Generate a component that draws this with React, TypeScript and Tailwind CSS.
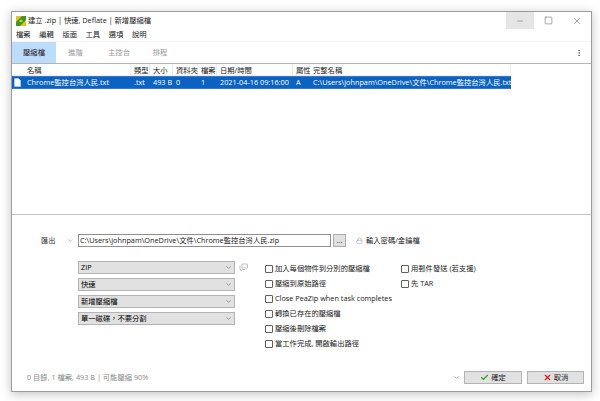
import React from 'react';
import { Check, ChevronDown, Lock, Minus, MoreVertical, Square, X } from 'lucide-react';

const cjk = { fontFamily: '"Open Sans", "Noto Sans CJK TC", sans-serif' };

const menus = ['檔案', '編輯', '版面', '工具', '選項', '說明'];

const columns = [
  { name: '名稱', width: 'w-[107px]', value: 'Chrome監控台灣人民.txt' },
  { name: '類型', width: 'w-[19px]', value: '.txt' },
  { name: '大小', width: 'w-[23px]', value: '493 B' },
  { name: '資料夾', width: 'w-[25px]', value: '0' },
  { name: '檔案', width: 'w-[19px]', value: '1' },
  { name: '日期/時間', width: 'w-[76px]', value: '2021-04-16 09:16:00' },
  { name: '屬性', width: 'w-[17px]', value: 'A' },
  { name: '完整名稱', width: 'w-[201px]', value: 'C:\\Users\\johnpam\\OneDrive\\文件\\Chrome監控台灣人民.txt' },
];

const selects = ['ZIP', '快速', '新增壓縮檔', '單一磁碟，不要分割'];

const leftChecks = [
  '加入每個物件到分別的壓縮檔',
  '壓縮到原始路徑',
  'Close PeaZip when task completes',
  '轉換已存在的壓縮檔',
  '壓縮後刪除檔案',
  '當工作完成, 開啟輸出路徑',
];

const rightChecks = ['用郵件發送 (若支援)', '先 TAR'];

const CheckRow = ({ label }: { label: string }) => (
  <div className="flex h-[15px] items-center gap-[2px]">
    <span className="h-[8px] w-[8px] rounded-[1px] border border-[#5f5f5f] bg-white" />
    <span className="whitespace-nowrap">{label}</span>
  </div>
);

const App = () => {
  return (
    <div className="h-[401px] w-[600px] overflow-hidden bg-white pl-[11px] pt-[11px] text-[7.3px] text-[#222]" style={cjk}>
      <div className="flex h-[381px] w-[581px] flex-col border border-[#9c9c9c] bg-white shadow-[0_2px_10px_rgba(0,0,0,0.25)]">
        {/* title bar */}
        <div className="flex h-[17px] shrink-0 items-center pl-[4px]">
          <svg width="10" height="10" viewBox="0 0 10 10" className="mr-[2px]">
            <rect width="10" height="10" fill="#e9c11f" />
            <path d="M0 10 L0 6 L6 0 L10 0 L10 4 L4 10 Z" fill="#3f9a1c" />
            <ellipse cx="5" cy="5" rx="1.8" ry="1.2" fill="#9fd64a" />
          </svg>
          <span>建立 .zip | 快速, Deflate | 新增壓縮檔</span>
          <div className="ml-auto flex h-[17px] self-start">
            <div className="flex w-[28px] items-center justify-center bg-[#e5e5e5]">
              <Minus size={8} strokeWidth={1} />
            </div>
            <div className="flex w-[28px] items-center justify-center">
              <Square size={9} strokeWidth={1} />
            </div>
            <div className="flex w-[29px] items-center justify-center">
              <X size={10} strokeWidth={1} />
            </div>
          </div>
        </div>

        {/* menu */}
        <div className="flex h-[12px] shrink-0 items-center gap-[8.2px] pl-[4px] pb-[1px]">
          {menus.map((m) => (
            <span key={m} className="w-[15px] whitespace-nowrap">{m}</span>
          ))}
        </div>

        {/* tabs */}
        <div className="flex h-[23px] shrink-0 items-stretch border-t border-b border-t-[#f3f3f3] border-b-[#b5b5b5]">
          <div className="flex w-[44px] items-center justify-center bg-[#bcdcfb]">壓縮檔</div>
          <div className="flex w-[39px] items-center justify-center text-[#9a9a9a]">進階</div>
          <div className="flex w-[48px] items-center justify-center text-[#9a9a9a]">主控台</div>
          <div className="flex w-[34px] items-center justify-center text-[#9a9a9a]">排程</div>
          <div className="ml-auto flex items-center pr-[8px]">
            <MoreVertical size={8} strokeWidth={1.5} />
          </div>
        </div>

        {/* file list */}
        <div className="h-[151px] shrink-0 border-b border-[#c4c4c4]">
          <div className="flex h-[12px] w-[499px] items-center border-b border-[#ededed] pl-[12px]">
            {columns.map((c) => (
              <div key={c.name} className={`${c.width} h-full shrink-0 whitespace-nowrap border-r border-[#ececec] pl-[3px] leading-[12px]`}>
                {c.name}
              </div>
            ))}
          </div>
          <div className="flex h-[13px] w-[499px] items-center border-y border-[#3b78c8] bg-[#0a62c2] text-white">
            <svg width="7" height="9" viewBox="0 0 7 9" className="ml-[2px] mr-[3px] shrink-0">
              <path d="M0.5 0.5 H4.5 L6.5 2.5 V8.5 H0.5 Z" fill="#fff" stroke="#c6d4e6" strokeWidth="0.6" />
            </svg>
            {columns.map((c) => (
              <div key={c.name} className={`${c.width} shrink-0 overflow-hidden whitespace-nowrap pl-[3px] leading-[11px]`}>
                {c.value}
              </div>
            ))}
          </div>
        </div>

        {/* output options */}
        <div className="flex min-h-0 flex-1 flex-col pl-[15px] pr-[7px]">
          <div className="mt-[19px] flex h-[13px] items-center">
            <span className="ml-[14px] w-[26px] text-[#333]">匯出</span>
            <ChevronDown size={7} strokeWidth={1.2} className="text-[#555]" />
            <div className="ml-[4px] flex h-[13px] w-[253px] items-center border border-[#8f8f8f] pl-[1px] leading-none">
              C:\Users\johnpam\OneDrive\文件\Chrome監控台灣人民.zip
            </div>
            <div className="ml-[2px] flex h-[13px] w-[13px] items-center justify-center border border-[#adadad] bg-[#e1e1e1] leading-none">...</div>
            <Lock size={7} strokeWidth={1} className="ml-[10px] text-[#555]" />
            <span className="ml-[3px]">輸入密碼/金鑰檔</span>
          </div>

          <div className="mt-[14px] flex">
            <div className="ml-[51px] flex w-[157px] shrink-0 flex-col gap-[4px] text-black">
              {selects.map((s) => (
                <div key={s} className="flex h-[13px] items-center justify-between border border-[#b4b4b4] bg-[#e1e1e1] px-[2px] leading-none">
                  <span>{s}</span>
                  <ChevronDown size={7} strokeWidth={1.4} className="text-[#333]" />
                </div>
              ))}
            </div>
            <svg width="9" height="9" viewBox="0 0 9 9" className="ml-[4px] mt-[2px] shrink-0" fill="none" stroke="#aaa" strokeWidth="0.7">
              <path d="M3 1 H8.5 V5 H3 Z M1 2.5 V6.5 H2 V8 L3.5 6.5 H6" />
            </svg>
            <div className="ml-[17px] w-[136px] shrink-0">
              {leftChecks.map((l) => (
                <CheckRow key={l} label={l} />
              ))}
            </div>
            <div>
              {rightChecks.map((l) => (
                <CheckRow key={l} label={l} />
              ))}
            </div>
          </div>

          <div className="mt-auto mb-[7px] flex h-[13px] items-center">
            <span className="text-[#8a8a8a]">0 目錄, 1 檔案, 493 B | 可能壓縮 90%</span>
            <ChevronDown size={7} strokeWidth={1.4} className="ml-auto mr-[4px] text-[#333]" />
            <div className="flex h-[13px] w-[58px] items-center justify-center gap-[2px] border border-[#b4b4b4] bg-[#e1e1e1]">
              <Check size={9} strokeWidth={3} className="text-[#18a81c]" />
              確定
            </div>
            <div className="ml-[5px] flex h-[13px] w-[57px] items-center justify-center gap-[2px] border border-[#b4b4b4] bg-[#e1e1e1]">
              <X size={9} strokeWidth={3} className="text-[#e0120c]" />
              取消
            </div>
          </div>
        </div>
      </div>
    </div>
  );
};

export default App;
